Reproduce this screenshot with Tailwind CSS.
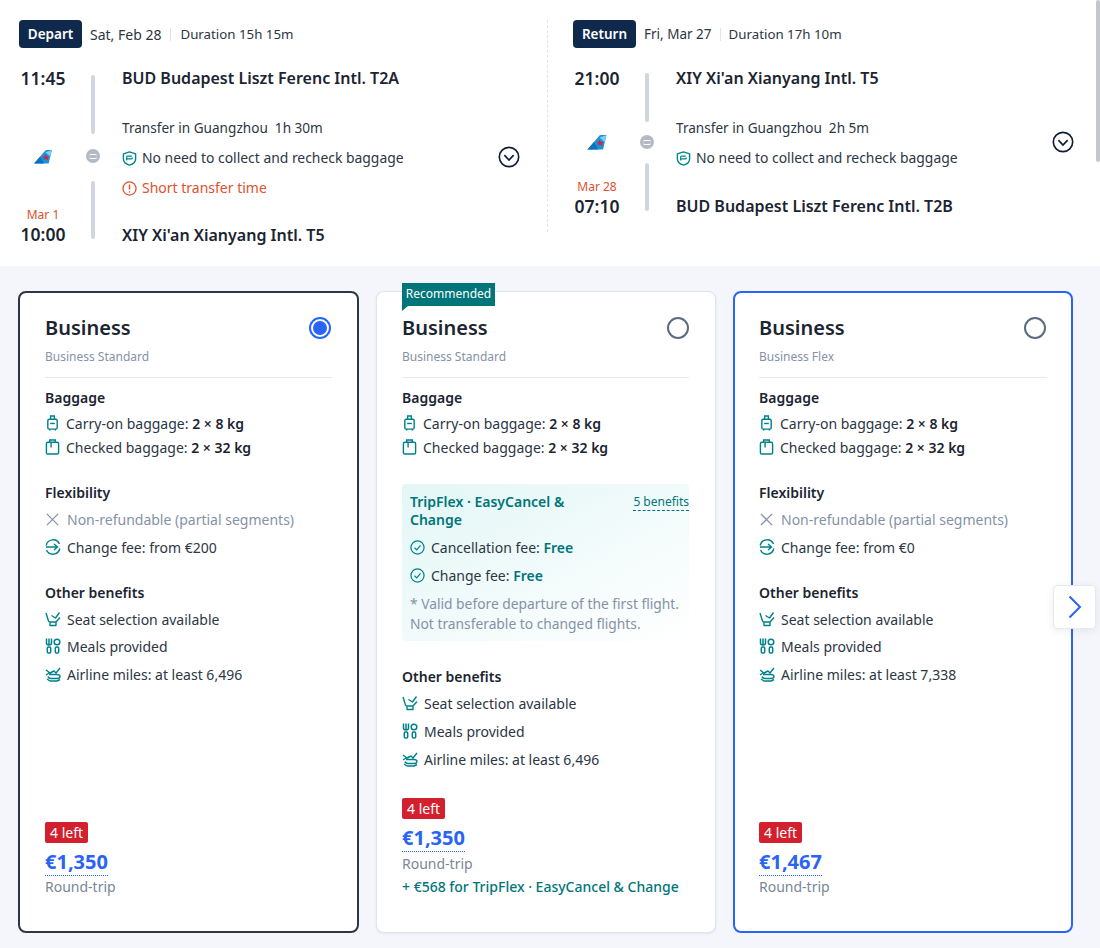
<!DOCTYPE html>
<html lang="en">
<head>
  <meta charset="UTF-8" />
  <title>Flight fare options</title>
  <script src="https://cdn.jsdelivr.net/npm/@tailwindcss/browser@4"></script>
</head>
<body class="relative h-[948px] w-[1100px] overflow-hidden bg-[#f4f6fb] font-['Noto_Sans','Liberation_Sans',sans-serif] text-[14px] text-[#2c3644]">
  <svg class="hidden">
    <symbol id="tail" viewBox="0 0 20 16"><path d="M.5 15.500 12.500 1.500Q13 1 14 1H19.500L16 15.500Z" fill="#1f8fd6"/><path d="M.5 15.500 7 8 11 15.500Z" fill="#0f6fc0"/><path d="M12.500 3.500 19.500 1 17.500 8Z" fill="#7fcdf0"/><path d="M12.500 5.500 13.500 8 16.500 8 14.800 9.500 15.500 12 13 10.500 10.500 11.500 11.500 9.300 9.500 7.800 12 8Z" fill="#d9203a"/></symbol>
    <symbol id="shield" viewBox="0 0 16 16"><path d="M8 1 14.500 3V8.500C14.500 11.500 11.500 14 8 15 4.500 14 1.500 11.500 1.500 8.500V3Z" fill="none" stroke="#00878c" stroke-width="1.500" stroke-linejoin="round"/><path d="M5 10V6.500Q5 5.500 6 5.500H10.500M5.500 8.500H10Q11 8.500 11 7.500V7" fill="none" stroke="#00878c" stroke-width="1.300"/></symbol>
    <symbol id="carry" viewBox="0 0 16 18"><path d="M6 5V1.500H10V5M5 15.500V17M11 15.500V17" fill="none" stroke="#00808a" stroke-width="1.500"/><rect x="3" y="5" width="10" height="10.500" rx="1.500" fill="none" stroke="#00808a" stroke-width="1.500"/><path d="M5.500 9.500H10.500" stroke="#00808a" stroke-width="1.500"/></symbol>
    <symbol id="checked" viewBox="0 0 16 18"><path d="M5 4V1.500H11V4M6.500 4V9.500" fill="none" stroke="#00808a" stroke-width="1.500"/><rect x="1.500" y="4" width="13" height="12.500" rx="1.500" fill="none" stroke="#00808a" stroke-width="1.500"/></symbol>
    <symbol id="cross" viewBox="0 0 16 16"><path d="M2 2 14 14M14 2 2 14" stroke="#8592a6" stroke-width="1.400" fill="none"/></symbol>
    <symbol id="change" viewBox="0 0 16 16"><path d="M1.200 6.500A7 7 0 0 1 14.500 5M14.800 9.500A7 7 0 0 1 1.500 11" fill="none" stroke="#00808a" stroke-width="1.400"/><path d="M1 8H4M4 8H12.500M9 5 12.500 8 9 11" fill="none" stroke="#00808a" stroke-width="1.400"/></symbol>
    <symbol id="seat" viewBox="0 0 16 16"><path d="M1 2 3.500 10Q3.800 11 5 11H11L15 6.500M6.500 4.500 10.500 7 14.500 1.500M5 11V14.500H11V11" fill="none" stroke="#00808a" stroke-width="1.400" stroke-linejoin="round"/></symbol>
    <symbol id="meal" viewBox="0 0 16 16"><path d="M1.500 .5V5Q1.500 7 4 7T6.500 5V.5M4 .5V7" fill="none" stroke="#00808a" stroke-width="1.500"/><rect x="2.300" y="9" width="3.400" height="6" rx="1.300" fill="none" stroke="#00808a" stroke-width="1.500"/><circle cx="12" cy="4" r="2.800" fill="none" stroke="#00808a" stroke-width="1.500"/><rect x="10.300" y="9" width="3.400" height="6" rx="1.300" fill="none" stroke="#00808a" stroke-width="1.500"/></symbol>
    <symbol id="miles" viewBox="0 0 16 16"><path d="M1 4 5 7 9 5 11 7 15 2M1 9 4 7M4 8.500H11.500Q15 8.500 15 10.500T11.500 12.500H6Q3.500 12.500 3 10.500M15 13.500 12 15H5L2 13" fill="none" stroke="#00808a" stroke-width="1.400" stroke-linejoin="round"/></symbol>
    <symbol id="check" viewBox="0 0 16 16"><circle cx="8" cy="8" r="7" fill="none" stroke="#00808a" stroke-width="1.300"/><path d="M4.800 8.200 7.200 10.500 11.200 5.800" fill="none" stroke="#00808a" stroke-width="1.300"/></symbol>
    <symbol id="down" viewBox="0 0 20 20"><circle cx="10" cy="10" r="8.800" fill="none" stroke="#0f1f33" stroke-width="1.500"/><path d="M5.800 8.300 10 12.800 14.200 8.300" fill="none" stroke="#0f1f33" stroke-width="1.500"/></symbol>
  </svg>

  <!-- itinerary -->
  <div class="flex h-[266px] bg-white pt-5">
    <section class="h-[212px] w-[548px] shrink-0 border-r border-dashed border-[#dfe3ea] pl-[19px]">
      <div class="flex h-7 items-center">
        <span class="flex h-7 w-[63px] items-center justify-center rounded bg-[#0f294d] text-[13.500px] font-semibold text-white">Depart</span>
        <span class="ml-2 text-[14px]">Sat, Feb 28</span>
        <span class="mx-[9px] h-[13px] w-px bg-[#dfe3ea]"></span>
        <span class="mt-px text-[13.300px]">Duration 15h 15m</span>
      </div>
      <div class="mt-[19px] flex h-[178px]">
        <div class="flex w-[48px] flex-col items-center">
          <span class="text-[17.500px] leading-[22px] font-semibold text-[#1b2431]">11:45</span>
          <svg class="mt-[60px] h-4 w-5"><use href="#tail" /></svg>
          <span class="mt-[43px] text-[12px] leading-4 text-[#e0512d]">Mar 1</span>
          <span class="text-[17.500px] leading-[22px] font-semibold text-[#1b2431]">10:00</span>
        </div>
        <div class="ml-[18px] flex w-[16px] flex-col items-center">
          <span class="mt-[8px] h-[59px] w-1 shrink-0 rounded bg-[#cfd6e0]"></span>
          <span class="mt-[15px] flex h-[14px] w-[14px] shrink-0 items-center justify-center rounded-full bg-[#b3bac6]"><span class="h-[5px] w-2 rounded-[2px] border-y border-white"></span></span>
          <span class="mt-[18px] h-[58px] w-1 shrink-0 rounded bg-[#cfd6e0]"></span>
        </div>
        <div class="ml-[21px] flex w-[376px] flex-col">
          <span class="text-[16px] leading-[22px] font-semibold text-[#1b2431]">BUD Budapest Liszt Ferenc Intl. T2A</span>
          <span class="mt-[29px] text-[13.600px] leading-5">Transfer in Guangzhou&nbsp; 1h 30m</span>
          <span class="mt-[10px] flex items-center text-[13.900px] leading-5"><svg class="mr-[5px] h-[15px] w-[15px]"><use href="#shield" /></svg>No need to collect and recheck baggage</span>
          <span class="mt-[10px] flex items-center text-[14px] leading-5 text-[#e0512d]"><svg class="mr-[5px] h-[15px] w-[15px]" viewBox="0 0 16 16"><circle cx="8" cy="8" r="7" fill="none" stroke="#e0512d" stroke-width="1.400"/><path d="M8 3.800V9M8 10.800V12.300" stroke="#e0512d" stroke-width="1.500"/></svg>Short transfer time</span>
          <span class="mt-[26px] text-[16px] leading-[22px] font-semibold text-[#1b2431]">XIY Xi'an Xianyang Intl. T5</span>
        </div>
        <svg class="mt-[79px] h-[22px] w-[22px]"><use href="#down" /></svg>
      </div>
    </section>

    <section class="w-[552px] shrink-0 pl-[25px]">
      <div class="flex h-7 items-center">
        <span class="flex h-7 w-[63px] items-center justify-center rounded bg-[#0f294d] text-[13.500px] font-semibold text-white">Return</span>
        <span class="ml-2 text-[13.500px]">Fri, Mar 27</span>
        <span class="mx-2 h-[13px] w-px bg-[#dfe3ea]"></span>
        <span class="mt-px text-[13.300px]">Duration 17h 10m</span>
      </div>
      <div class="mt-[19px] flex h-[150px]">
        <div class="flex w-[48px] flex-col items-center">
          <span class="text-[17.500px] leading-[22px] font-semibold text-[#1b2431]">21:00</span>
          <svg class="mt-[45px] h-4 w-5"><use href="#tail" /></svg>
          <span class="mt-[29px] text-[12px] leading-4 text-[#e0512d]">Mar 28</span>
          <span class="text-[17.500px] leading-[22px] font-semibold text-[#1b2431]">07:10</span>
        </div>
        <div class="ml-[18px] flex w-[16px] flex-col items-center">
          <span class="mt-[6px] h-[49px] w-1 shrink-0 rounded bg-[#cfd6e0]"></span>
          <span class="mt-[13px] flex h-[14px] w-[14px] shrink-0 items-center justify-center rounded-full bg-[#b3bac6]"><span class="h-[5px] w-2 rounded-[2px] border-y border-white"></span></span>
          <span class="mt-[14px] h-[48px] w-1 shrink-0 rounded bg-[#cfd6e0]"></span>
        </div>
        <div class="ml-[21px] flex w-[376px] flex-col">
          <span class="text-[16px] leading-[22px] font-semibold text-[#1b2431]">XIY Xi'an Xianyang Intl. T5</span>
          <span class="mt-[29px] text-[13.600px] leading-5">Transfer in Guangzhou&nbsp; 2h 5m</span>
          <span class="mt-[10px] flex items-center text-[13.900px] leading-5"><svg class="mr-[5px] h-[15px] w-[15px]"><use href="#shield" /></svg>No need to collect and recheck baggage</span>
          <span class="mt-[27px] text-[16px] leading-[22px] font-semibold text-[#1b2431]">BUD Budapest Liszt Ferenc Intl. T2B</span>
        </div>
        <svg class="mt-[64px] h-[22px] w-[22px]"><use href="#down" /></svg>
      </div>
    </section>
  </div>

  <!-- fare cards -->
  <div class="flex gap-[17px] pt-[25px] pl-[18px]">
    <article class="flex h-[642px] w-[341px] flex-col rounded-lg border-2 border-[#2c3644] bg-white pt-[20px] pr-[25px] pb-[34px] pl-[25px]">
      <div class="flex items-center justify-between pr-[1px]">
        <h2 class="text-[20px] leading-[30px] font-semibold text-[#1b2431]">Business</h2>
        <span class="flex h-[22px] w-[22px] items-center justify-center rounded-full border-2 border-[#2a64f6]"><span class="h-[14px] w-[14px] rounded-full bg-[#2a64f6]"></span></span>
      </div>
      <p class="mt-[6px] border-b border-[#e6e9ee] pb-[12px] text-[12px] leading-4 text-[#8592a6]">Business Standard</p>
      <h3 class="mt-[10px] text-[14px] leading-5 font-semibold text-[#1b2431]">Baggage</h3>
      <div class="mt-[3px] flex h-[24px] items-center"><svg class="mr-[6px] h-[18px] w-[15px]"><use href="#carry" /></svg>Carry-on baggage:&nbsp;<b class="font-semibold text-[#1b2431]">2 × 8 kg</b></div>
      <div class="flex h-[24px] items-center"><svg class="mr-[6px] h-[18px] w-[15px]"><use href="#checked" /></svg>Checked baggage:&nbsp;<b class="font-semibold text-[#1b2431]">2 × 32 kg</b></div>
      <h3 class="mt-[24px] text-[14px] leading-5 font-semibold text-[#1b2431]">Flexibility</h3>
      <div class="mt-[4px] flex h-[24px] items-center text-[#8592a6]"><svg class="mr-[7px] h-[15px] w-[15px]"><use href="#cross" /></svg>Non-refundable (partial segments)</div>
      <div class="mt-[4px] flex h-[24px] items-center"><svg class="mr-[6px] h-[16px] w-[16px]"><use href="#change" /></svg>Change fee: from €200</div>
      <h3 class="mt-[24px] text-[14px] leading-5 font-semibold text-[#1b2431]">Other benefits</h3>
      <div class="mt-[4px] flex h-[24px] items-center"><svg class="mr-[6px] h-[16px] w-[16px]"><use href="#seat" /></svg>Seat selection available</div>
      <div class="mt-[3px] flex h-[24px] items-center"><svg class="mr-[6px] h-[16px] w-[16px]"><use href="#meal" /></svg>Meals provided</div>
      <div class="mt-[4px] flex h-[24px] items-center"><svg class="mr-[6px] h-[16px] w-[16px]"><use href="#miles" /></svg>Airline miles: at least 6,496</div>
      <div class="mt-auto flex flex-col items-start">
        <span class="flex h-[21px] items-center rounded-[2px] bg-[#d3202e] px-[5px] text-[14px] text-white">4 left</span>
        <span class="mt-[5px] border-b border-dotted border-[#2a64f6] text-[20px] leading-[27px] font-bold text-[#2a64f6]">€1,350</span>
        <span class="mt-[1px] text-[14px] leading-5 text-[#7b8696]">Round-trip</span>
      </div>
    </article>

    <article class="relative flex h-[642px] w-[340px] flex-col rounded-lg border border-[#dfe3ea] bg-white pt-[21px] pr-[26px] pb-[35px] pl-[25px] shadow-[0_1px_3px_rgba(15,41,77,0.08)]">
      <span class="absolute -top-[9px] left-[25px] h-[28px] w-[93px] bg-[#00757a] text-center text-[12px] leading-[22px] text-white [clip-path:polygon(0_0,100%_0,100%_82%,6px_82%,0_100%)]">Recommended</span>
      <div class="flex items-center justify-between">
        <h2 class="text-[20px] leading-[30px] font-semibold text-[#1b2431]">Business</h2>
        <span class="h-[22px] w-[22px] rounded-full border-2 border-[#5c6b80]"></span>
      </div>
      <p class="mt-[6px] border-b border-[#e6e9ee] pb-[12px] text-[12px] leading-4 text-[#8592a6]">Business Standard</p>
      <h3 class="mt-[10px] text-[14px] leading-5 font-semibold text-[#1b2431]">Baggage</h3>
      <div class="mt-[3px] flex h-[24px] items-center"><svg class="mr-[6px] h-[18px] w-[15px]"><use href="#carry" /></svg>Carry-on baggage:&nbsp;<b class="font-semibold text-[#1b2431]">2 × 8 kg</b></div>
      <div class="flex h-[24px] items-center"><svg class="mr-[6px] h-[18px] w-[15px]"><use href="#checked" /></svg>Checked baggage:&nbsp;<b class="font-semibold text-[#1b2431]">2 × 32 kg</b></div>
      <div class="mt-[25px] h-[157px] rounded bg-linear-to-br from-[#e3f6f6] to-white pt-[9px] pl-2">
        <div class="flex items-start justify-between">
          <span class="w-[170px] text-[14px] leading-[18px] font-semibold text-[#00757a]">TripFlex · EasyCancel &amp; Change</span>
          <span class="border-b border-dashed border-[#00757a] text-[12px] leading-[17px] text-[#00757a]">5 benefits</span>
        </div>
        <div class="mt-[6px] flex h-[24px] items-center"><svg class="mr-[6px] h-[15px] w-[15px]"><use href="#check" /></svg>Cancellation fee:&nbsp;<b class="font-semibold text-[#00757a]">Free</b></div>
        <div class="mt-[4px] flex h-[24px] items-center"><svg class="mr-[6px] h-[15px] w-[15px]"><use href="#check" /></svg>Change fee:&nbsp;<b class="font-semibold text-[#00757a]">Free</b></div>
        <p class="mt-[7px] text-[13.800px] leading-[20px] text-[#8592a6]">* Valid before departure of the first flight. Not transferable to changed flights.</p>
      </div>
      <h3 class="mt-[26px] text-[14px] leading-5 font-semibold text-[#1b2431]">Other benefits</h3>
      <div class="mt-[4px] flex h-[24px] items-center"><svg class="mr-[6px] h-[16px] w-[16px]"><use href="#seat" /></svg>Seat selection available</div>
      <div class="mt-[4px] flex h-[24px] items-center"><svg class="mr-[6px] h-[16px] w-[16px]"><use href="#meal" /></svg>Meals provided</div>
      <div class="mt-[4px] flex h-[24px] items-center"><svg class="mr-[6px] h-[16px] w-[16px]"><use href="#miles" /></svg>Airline miles: at least 6,496</div>
      <div class="mt-auto flex flex-col items-start">
        <span class="flex h-[21px] items-center rounded-[2px] bg-[#d3202e] px-[5px] text-[14px] text-white">4 left</span>
        <span class="mt-[5px] border-b border-dotted border-[#2a64f6] text-[20px] leading-[27px] font-bold text-[#2a64f6]">€1,350</span>
        <span class="mt-[2px] text-[14px] leading-5 text-[#7b8696]">Round-trip</span>
        <span class="mt-[3px] text-[14px] leading-5 font-medium text-[#00757a]">+ €568 for TripFlex · EasyCancel &amp; Change</span>
      </div>
    </article>

    <article class="flex h-[642px] w-[340px] flex-col rounded-lg border-2 border-[#2a64f6] bg-white pt-[20px] pr-[24px] pb-[34px] pl-[24px]">
      <div class="flex items-center justify-between pr-px">
        <h2 class="text-[20px] leading-[30px] font-semibold text-[#1b2431]">Business</h2>
        <span class="h-[22px] w-[22px] rounded-full border-2 border-[#5c6b80]"></span>
      </div>
      <p class="mt-[6px] border-b border-[#e6e9ee] pb-[12px] text-[12px] leading-4 text-[#8592a6]">Business Flex</p>
      <h3 class="mt-[10px] text-[14px] leading-5 font-semibold text-[#1b2431]">Baggage</h3>
      <div class="mt-[3px] flex h-[24px] items-center"><svg class="mr-[6px] h-[18px] w-[15px]"><use href="#carry" /></svg>Carry-on baggage:&nbsp;<b class="font-semibold text-[#1b2431]">2 × 8 kg</b></div>
      <div class="flex h-[24px] items-center"><svg class="mr-[6px] h-[18px] w-[15px]"><use href="#checked" /></svg>Checked baggage:&nbsp;<b class="font-semibold text-[#1b2431]">2 × 32 kg</b></div>
      <h3 class="mt-[24px] text-[14px] leading-5 font-semibold text-[#1b2431]">Flexibility</h3>
      <div class="mt-[4px] flex h-[24px] items-center text-[#8592a6]"><svg class="mr-[7px] h-[15px] w-[15px]"><use href="#cross" /></svg>Non-refundable (partial segments)</div>
      <div class="mt-[4px] flex h-[24px] items-center"><svg class="mr-[6px] h-[16px] w-[16px]"><use href="#change" /></svg>Change fee: from €0</div>
      <h3 class="mt-[24px] text-[14px] leading-5 font-semibold text-[#1b2431]">Other benefits</h3>
      <div class="mt-[4px] flex h-[24px] items-center"><svg class="mr-[6px] h-[16px] w-[16px]"><use href="#seat" /></svg>Seat selection available</div>
      <div class="mt-[3px] flex h-[24px] items-center"><svg class="mr-[6px] h-[16px] w-[16px]"><use href="#meal" /></svg>Meals provided</div>
      <div class="mt-[4px] flex h-[24px] items-center"><svg class="mr-[6px] h-[16px] w-[16px]"><use href="#miles" /></svg>Airline miles: at least 7,338</div>
      <div class="mt-auto flex flex-col items-start">
        <span class="flex h-[21px] items-center rounded-[2px] bg-[#d3202e] px-[5px] text-[14px] text-white">4 left</span>
        <span class="mt-[5px] border-b border-dotted border-[#2a64f6] text-[20px] leading-[27px] font-bold text-[#2a64f6]">€1,467</span>
        <span class="mt-[1px] text-[14px] leading-5 text-[#7b8696]">Round-trip</span>
      </div>
    </article>
  </div>

  <!-- carousel arrow and scrollbar sit over the page -->
  <button class="absolute top-[585px] left-[1053px] flex h-[44px] w-[43px] items-center justify-center rounded border border-[#e6e9ee] bg-white shadow-[0_2px_8px_rgba(15,41,77,0.08)]">
    <svg class="h-[24px] w-[14px]" viewBox="0 0 14 24"><path d="M1.500 1.500 12 12 1.500 22.500" fill="none" stroke="#2a64f6" stroke-width="2"/></svg>
  </button>
  <div class="absolute top-0 right-0 h-[162px] w-[4px] rounded-full bg-[#c4c8ce]"></div>
</body>
</html>
